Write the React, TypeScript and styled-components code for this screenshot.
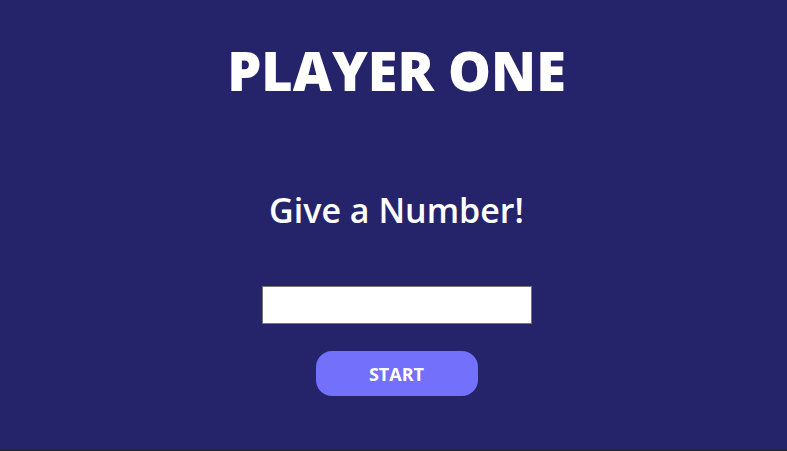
import React from "react";
import styled, { createGlobalStyle } from "styled-components";

const Global = createGlobalStyle`
  html, body { margin: 0; padding: 0; background: #202124; }
  body { font-family: "Open Sans", "Noto Sans", sans-serif; }
`;

const Screen = styled.main`
  height: 450px;
  box-sizing: border-box;
  padding-left: 6px;
  background: #25246b;
  display: flex;
  flex-direction: column;
  align-items: center;
  color: #ffffff;
`;

const Title = styled.h1`
  margin: 37px 0 0;
  font-size: 54px;
  font-weight: 800;
  line-height: 66px;
  letter-spacing: 0;
`;

const Prompt = styled.h2`
  margin: 85px 0 0;
  font-size: 34px;
  font-weight: 600;
  line-height: 44px;
`;

const NumberInput = styled.input`
  margin-top: 54px;
  width: 270px;
  height: 38px;
  box-sizing: border-box;
  border: 1px solid #767676;
  background: #ffffff;
  padding: 0 6px;
  font-size: 16px;
  outline: none;
`;

const StartButton = styled.button`
  margin-top: 27px;
  width: 162px;
  height: 45px;
  border: none;
  border-radius: 16px;
  background: #7371fc;
  color: #ffffff;
  font-family: "Open Sans", "Noto Sans", sans-serif;
  font-size: 18px;
  font-weight: 700;
  cursor: pointer;
`;

export default function App() {
  return (
    <>
      <Global />
      <Screen>
        <Title>PLAYER ONE</Title>
        <Prompt>Give a Number!</Prompt>
        <NumberInput type="number" aria-label="number" />
        <StartButton>START</StartButton>
      </Screen>
    </>
  );
}
